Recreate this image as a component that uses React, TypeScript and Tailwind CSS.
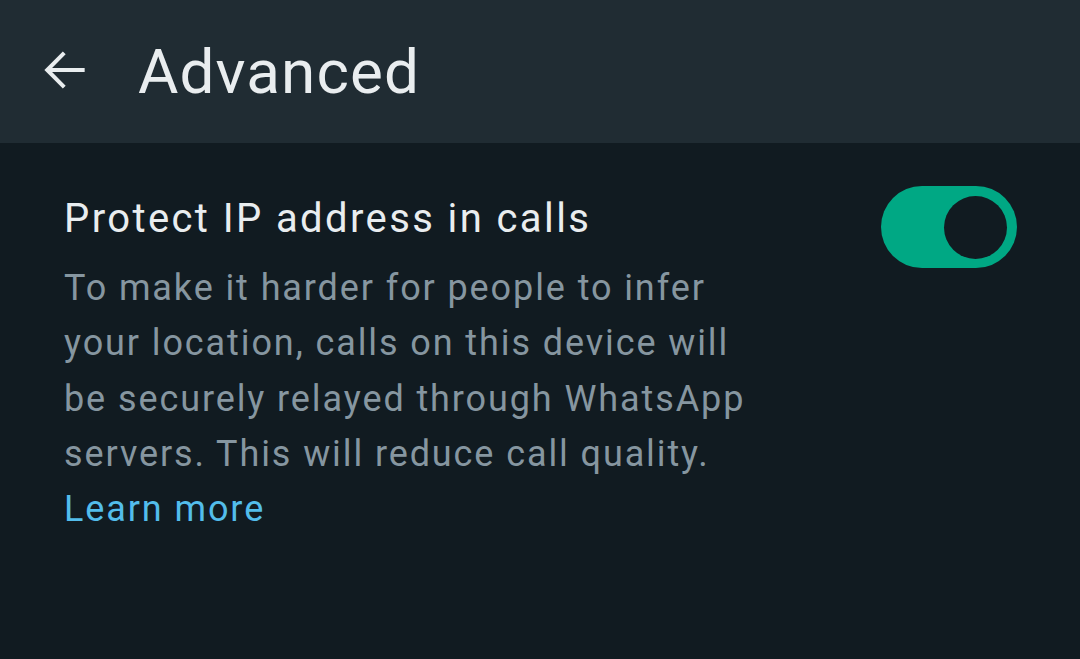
export default function App() {
  return (
    <div className="h-[659px] w-[1080px] bg-[#111b21] font-['Roboto',sans-serif] overflow-hidden">
      {/* Top bar */}
      <div className="flex h-[143px] items-center bg-[#202c33]">
        <svg className="ml-[33px] mb-[3px] h-[62px] w-[62px]" viewBox="0 0 24 24" fill="none" stroke="#e9edef" strokeWidth="1.55">
          <path d="M20 12H5.6" />
          <path d="M12.1 5.4L5.5 12l6.6 6.6" />
        </svg>
        <h1 className="ml-[43px] text-[62px] leading-none tracking-[1.1px] text-[#e9edef]">Advanced</h1>
      </div>

      {/* Setting row */}
      <div className="flex items-start justify-between pl-[64px] pr-[63px]">
        <div className="pt-[50px]">
          <div className="text-[40px] leading-[52px] tracking-[2.4px] text-[#e9edef]">Protect IP address in calls</div>
          <p className="mt-[16px] w-[710px] text-[36px] leading-[55.3px] tracking-[1.9px] text-[#8696a0]">
            To make it harder for people to infer your location, calls on this device will be securely relayed through WhatsApp servers. This will reduce call quality.
            <br />
            <span className="text-[#53bdeb]">Learn more</span>
          </p>
        </div>
        <div className="mt-[43px] flex h-[82px] w-[136px] items-center justify-end rounded-full bg-[#00a884] pr-[10px]">
          <div className="h-[63px] w-[63px] rounded-full bg-[#111b21]" />
        </div>
      </div>
    </div>
  )
}
